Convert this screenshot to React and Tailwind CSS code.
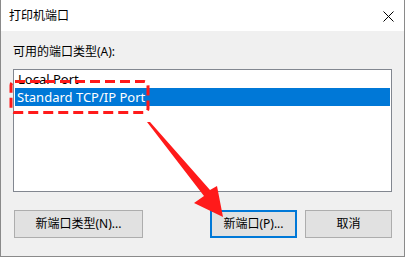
export default function App() {
    const font = { fontFamily: '"Noto Sans", "Noto Sans CJK SC", sans-serif' };

    return (
        <div
            className="relative w-[405px] h-[257px] overflow-hidden bg-[#f0f0f0] border-x border-b border-[#8a8a8a] text-black"
            style={font}
        >
            {/* title bar */}
            <div className="flex h-[31px] items-center justify-between bg-white pl-[8px] pr-[10px]">
                <span className="text-[12px] leading-none">打印机端口</span>
                <svg width="11" height="11" viewBox="0 0 11 11" className="mt-[1px]">
                    <path d="M0.5 0.5 L10.5 10.5 M10.5 0.5 L0.5 10.5" stroke="#000" strokeWidth="1" />
                </svg>
            </div>

            {/* body */}
            <div className="px-[12px] pt-[13px]">
                <div className="h-[16px] text-[12px] leading-[16px]">可用的端口类型(A):</div>

                <div className="mt-[9px] h-[123px] border border-[#828790] bg-white p-[1px] text-[13px]">
                    <div className="h-[17px] px-[3px] leading-[17px]">Local Port</div>
                    <div className="h-[18px] bg-[#0078d7] px-[2px] leading-[18px] text-white">
                        Standard TCP/IP Port
                    </div>
                </div>

                <div className="mt-[18px] flex text-[12px]">
                    <button className="ml-[1px] h-[28px] w-[129px] border border-[#adadad] bg-[#e1e1e1]">
                        新端口类型(N)...
                    </button>
                    <button className="ml-[67px] h-[28px] w-[87px] border-2 border-[#0078d7] bg-[#e1e1e1]">
                        新端口(P)...
                    </button>
                    <button className="ml-[8px] h-[28px] w-[87px] border border-[#adadad] bg-[#e1e1e1]">
                        取消
                    </button>
                </div>
            </div>

            {/* annotation overlay */}
            <svg className="pointer-events-none absolute inset-0" width="405" height="257">
                <rect
                    x="10"
                    y="81.5"
                    width="137"
                    height="31"
                    rx="4"
                    fill="none"
                    stroke="#ff1a1a"
                    strokeWidth="3"
                    strokeDasharray="10 5"
                />
                <polygon
                    points="146,122 149,122 209,190 216,186 222,217 193,203 203,196"
                    fill="#ff1a1a"
                />
            </svg>
        </div>
    );
}
